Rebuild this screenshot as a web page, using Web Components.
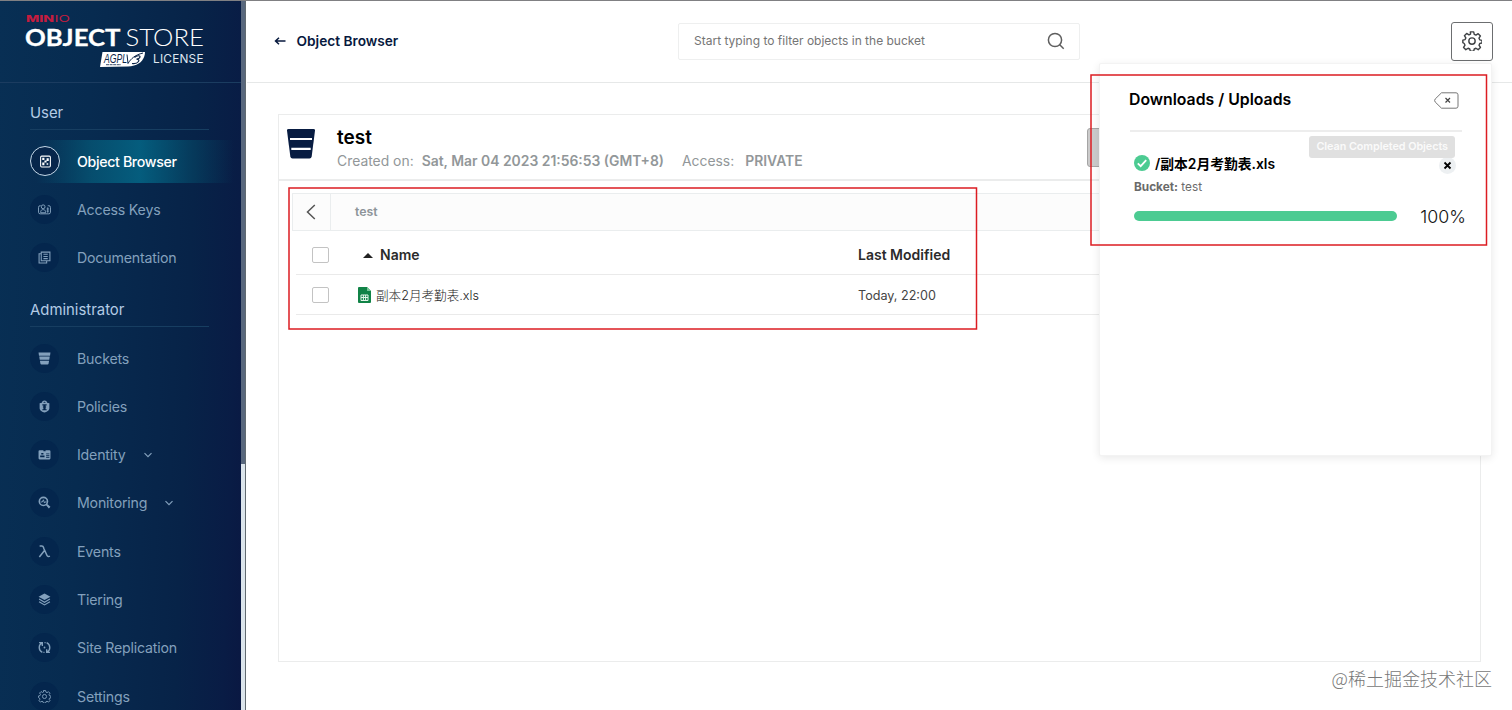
<!DOCTYPE html>
<html lang="en">
<head>
<meta charset="utf-8">
<title>MinIO Console</title>
<style>
  html, body { margin: 0; height: 100%; }
  body {
    overflow: hidden;
    background: #fff;
    font-family: Inter, "Noto Sans CJK SC", sans-serif;
    color: #000;
  }
</style>
</head>
<body>
<console-app></console-app>

<script>
const ICONS = {
  browser: '<rect x="3" y="2" width="18" height="20" rx="2" fill="none" stroke="currentColor" stroke-width="2"/><path d="M6 5h4v4H6zM14 6h4v5h-4zM10 10h4v4h-4zM6 14h4v5H6zM14 15h3v3h-3z"/>',
  keys: '<g fill="none" stroke="currentColor" stroke-width="1.8"><path d="M5 5H4a3 3 0 0 0-3 3v9a3 3 0 0 0 3 3h16a3 3 0 0 0 3-3V8a3 3 0 0 0-3-3h-2"/><circle cx="9.500" cy="7" r="3.500"/><path d="M5 18v-2c0-5 9-5 9 0v2zM18 8v10M16 11h4M16 15h4"/></g>',
  docs: '<g fill="none" stroke="currentColor" stroke-width="2"><path d="M6 2h16v16H6zM6 5H2v17h14v-4M10 6h8M10 10h8M10 14h8"/></g>',
  bucket: '<path d="M1 1h22l-.8 6H1.800zM2.300 8.500h19.400l-.9 6H3.200zM3.600 16h16.800l-.8 5q-.3 2-2 2H6.400q-1.700 0-2-2z"/>',
  policy: '<path fill-rule="evenodd" d="M12 1a5 5 0 0 1 5 4l4 1v9c0 4-5 7-9 8-4-1-9-4-9-8V6l4-1a5 5 0 0 1 5-4zm-2 4h4a2 2 0 0 0-4 0zm-2 3v2h2v2H9v2h1v3H8v2h8v-2h-2v-3h1v-2h-1v-2h2V8z"/>',
  identity: '<path fill-rule="evenodd" d="M3 4h7v2h4V4h7q2 0 2 2v13q0 2-2 2H3q-2 0-2-2V6q0-2 2-2zm3 5v3h4V9zm-2 5v3h8v-3zm11-4v1.500h6V10zm0 3.500V15h6v-1.500zm0 3.500v1.500h6V17z"/>',
  monitor: '<circle cx="10" cy="10" r="7.500" fill="none" stroke="currentColor" stroke-width="3"/><path d="M16 14l7 6-3 3-6-7z"/><path d="M5 11h3l2-4 2 6 1-2h3" fill="none" stroke="currentColor" stroke-width="1.800"/>',
  lambda: '<path d="M3 2h4c3 0 3 2 4 5l5 11c1 3 3 4 6 2.500M12 10L2.500 22" fill="none" stroke="currentColor" stroke-width="2.800"/>',
  tiers: '<path d="M12 1l11 6-11 6L1 7z"/><path d="M2 11l10 6 10-6M2 16l10 6 10-6" fill="none" stroke="currentColor" stroke-width="2.200"/>',
  sync: '<g fill="none" stroke="currentColor" stroke-width="2.500"><path d="M8 21C0 17 1 7 7 4M2 3h6v6M16 3c8 4 7 14 1 17M22 21h-6v-6M14 3h-2M12 21h-2"/></g><circle cx="12" cy="12" r="1.700"/>',
  gear: '<g fill="none" stroke="currentColor" stroke-width="1.700" stroke-linejoin="round"><path d="M10 1h4l.7 3 2 .9 2.700-1.700 2.700 2.700-1.700 2.700.9 2 2.700.700v3l-2.700.700-.9 2 1.700 2.700-2.700 2.700-2.700-1.700-2 .9-.7 2.600h-4l-.7-2.600-2-.9-2.700 1.700-2.700-2.700 1.700-2.700-.9-2L1 14v-3l2.700-.7.9-2-1.700-2.700 2.700-2.700 2.700 1.700 2-.9z"/><circle cx="12" cy="12" r="3.800"/></g>'
};

const CHEVRON = '<svg class="chev" viewBox="0 0 10 10"><path d="M1.500 3.200L5 6.700l3.500-3.500" fill="none" stroke="currentColor" stroke-width="1.200"/></svg>';

class BaseElement extends HTMLElement {
  constructor() {
    super();
    this.attachShadow({ mode: 'open' });
  }
  connectedCallback() {
    const template = document.createElement('template');
    template.innerHTML = this.render();
    this.shadowRoot.replaceChildren(template.content.cloneNode(true));
  }
}

class GlyphIcon extends BaseElement {
  render() {
    return `
      <style>
        :host { display: block; width: 13px; height: 13px; }
        svg { display: block; width: 100%; height: 100%; fill: currentColor; }
      </style>
      <svg viewBox="0 0 24 24">${ICONS[this.getAttribute('name')]}</svg>
    `;
  }
}
customElements.define('glyph-icon', GlyphIcon);

class ProductLogo extends BaseElement {
  render() {
    return `
      <style>
        :host { display: block; height: 82px; border-bottom: 1px solid #1b3c60; box-sizing: border-box; }
        svg { display: block; width: 241px; height: 81px; }
      </style>
      <svg viewBox="0 1 241 81">
        <g font-family="Inter, sans-serif">
          <text x="26" y="22.300" font-size="9.500" font-weight="800" fill="#c51c3f" textLength="28" lengthAdjust="spacingAndGlyphs">MIN</text>
          <text x="54.500" y="22.300" font-size="9.500" font-weight="400" fill="#c51c3f" textLength="15.500" lengthAdjust="spacingAndGlyphs">IO</text>
        </g>
        <g font-family="Lato, sans-serif" fill="#fff">
          <text x="25" y="46.300" font-size="23" font-weight="700" stroke="#fff" stroke-width=".3" textLength="95.500" lengthAdjust="spacingAndGlyphs">OBJECT</text>
          <text x="125.500" y="46.300" font-size="23" font-weight="300" textLength="78.500" lengthAdjust="spacingAndGlyphs">STORE</text>
        </g>
        <path d="M102.500 52H145c0 6-4 12-11 13.500-2 .7-4 1-6 1.100l-28 .400z" fill="#fff"/>
        <text x="104" y="62.500" font-family="Liberation Sans, sans-serif" font-size="12" font-style="italic" fill="#0a2347" textLength="23" lengthAdjust="spacingAndGlyphs">AGPL</text>
        <path d="M127 54.500l1 9c3-5 7-8.500 15-10.500" fill="none" stroke="#0a2347" stroke-width="1"/>
        <path d="M134.500 57.500c2-2 6-2.500 5.500-.5-.3 1.500-2 2-3.500 2.200 2 .1 3 .9 2 2.300-1.300 1.900-4 2.400-6.500 2" fill="none" stroke="#0a2347" stroke-width="1.200"/>
        <path d="M106 64.700h15" stroke="#0a2347" stroke-width=".8" stroke-dasharray="3 .6"/>
        <text x="153" y="63.300" font-family="Inter, sans-serif" font-size="11.800" fill="#dfe7f1" textLength="50.500">LICENSE</text>
      </svg>
    `;
  }
}
customElements.define('product-logo', ProductLogo);

class NavSection extends BaseElement {
  render() {
    return `
      <style>
        :host { display: block; }
        h2 {
          margin: 0 32px 7px 30px;
          height: 45px;
          line-height: 56px;
          font-size: 14.900px;
          font-weight: 400;
          color: #b3cbe5;
          border-bottom: 1px solid #173e61;
          box-sizing: border-box;
        }
      </style>
      <h2>${this.getAttribute('label')}</h2>
      <slot></slot>
    `;
  }
}
customElements.define('nav-section', NavSection);

class NavItem extends BaseElement {
  render() {
    return `
      <style>
        :host {
          display: flex;
          align-items: center;
          height: 48.300px;
          padding-left: 30px;
          color: #83a0bc;
          font-size: 14.200px;
          letter-spacing: -.2px;
        }
        .disc {
          display: flex;
          align-items: center;
          justify-content: center;
          width: 29px;
          height: 29px;
          margin-right: 18px;
          border-radius: 50%;
          box-sizing: border-box;
          background: #04264d;
        }
        .chev { width: 10px; height: 10px; margin-left: 17px; }
        :host([active]) {
          color: #fff;
          font-weight: 500;
          letter-spacing: -.350px;
          background: linear-gradient(90deg, transparent 15%, rgba(5, 96, 126, .65) 38%, rgba(4, 102, 134, .85) 58%, rgba(5, 80, 110, .5) 80%, transparent 97%) 0 3px / 100% 43px no-repeat;
        }
        :host([active]) .disc { border: 1px solid #c5d8e8; background: #07264b; width: 30px; height: 30px; margin-right: 17px; }
      </style>
      <span class="disc"><glyph-icon name="${this.getAttribute('icon')}"></glyph-icon></span>
      <span><slot></slot></span>
      ${this.hasAttribute('expandable') ? CHEVRON : ''}
    `;
  }
}
customElements.define('nav-item', NavItem);

class SideNav extends BaseElement {
  render() {
    return `
      <style>
        :host {
          display: flex;
          width: 247px;
          flex: none;
          overflow: hidden;
        }
        nav {
          width: 241px;
          background: linear-gradient(92deg, #082f54 0%, #072b50 35%, #072348 75%, #091c45 93%, #0a1842 100%);
        }
        nav-section:first-of-type { margin-top: 2px; }
        .track { width: 4px; background: #dbe4eb; border-right: 1px solid #616a70; }
        .thumb { height: 463px; background: #58677d; }
      </style>
      <nav>
        <product-logo></product-logo>
        <nav-section label="User">
          <nav-item icon="browser" active>Object Browser</nav-item>
          <nav-item icon="keys">Access Keys</nav-item>
          <nav-item icon="docs">Documentation</nav-item>
        </nav-section>
        <nav-section label="Administrator">
          <nav-item icon="bucket">Buckets</nav-item>
          <nav-item icon="policy">Policies</nav-item>
          <nav-item icon="identity" expandable>Identity</nav-item>
          <nav-item icon="monitor" expandable>Monitoring</nav-item>
          <nav-item icon="lambda">Events</nav-item>
          <nav-item icon="tiers">Tiering</nav-item>
          <nav-item icon="sync">Site Replication</nav-item>
          <nav-item icon="gear">Settings</nav-item>
        </nav-section>
      </nav>
      <div class="track"><div class="thumb"></div></div>
    `;
  }
}
customElements.define('side-nav', SideNav);

class SearchBox extends BaseElement {
  render() {
    return `
      <style>
        :host {
          display: flex;
          align-items: center;
          justify-content: space-between;
          width: 402px;
          height: 37px;
          padding: 0 14px 1px 15px;
          box-sizing: border-box;
          border: 1px solid #eeefef;
          border-radius: 2px;
          font-size: 12px;
          color: #757575;
        }
        span { padding-bottom: 2px; }
        svg { width: 18px; height: 18px; }
      </style>
      <span><slot></slot></span>
      <svg viewBox="0 0 18 18" fill="none" stroke="#5e5e5e" stroke-width="1.500"><circle cx="8" cy="8" r="6.600"/><path d="M12.500 12.500l4.200 4.200"/></svg>
    `;
  }
}
customElements.define('search-box', SearchBox);

class PageHeader extends BaseElement {
  render() {
    return `
      <style>
        :host {
          display: grid;
          grid-template-columns: 431px 402px 1fr;
          align-items: center;
          height: 82px;
          box-sizing: border-box;
          border-bottom: 1px solid #e6e8e8;
        }
        .back { display: flex; align-items: center; gap: 11px; padding: 0 0 2px 26.500px; font-size: 13.700px; font-weight: 600; color: #07193e; }
        .back svg { width: 12px; height: 10px; }
        button {
          justify-self: end;
          display: flex;
          align-items: center;
          justify-content: center;
          width: 42px;
          height: 39px;
          margin-right: 19px;
          padding: 0 1px 2px 0;
          border: 1px solid #6c6e70;
          border-radius: 3px;
          background: #fff;
          color: #3f4245;
        }
        glyph-icon { width: 20px; height: 20px; }
      </style>
      <div class="back">
        <svg viewBox="0 0 12 10" fill="none" stroke="currentColor" stroke-width="1.500"><path d="M11.500 5H1.500M5 1.700L1.500 5 5 8.300"/></svg>
        <span>Object Browser</span>
      </div>
      <search-box>Start typing to filter objects in the bucket</search-box>
      <button><glyph-icon name="gear"></glyph-icon></button>
    `;
  }
}
customElements.define('page-header', PageHeader);

class BucketHeader extends BaseElement {
  render() {
    return `
      <style>
        :host {
          display: flex;
          height: 66px;
          box-sizing: border-box;
          padding: 0 16px 0 8px;
          border-bottom: 2px solid #ebecec;
        }
        .logo { width: 28px; height: 30px; margin-top: 14px; }
        .info { margin-left: 22px; flex: 1; }
        h1 { margin: 10px 0 0; font-size: 19px; line-height: 25px; font-weight: 600; }
        p { display: flex; margin: 1px 0 0; font-size: 13.900px; line-height: 20px; color: #929799; }
        b { margin-left: 8px; font-weight: 600; }
        .access { margin-left: 18px; }
        .access + b { margin-left: 11px; }
        .tools { width: 375px; height: 37px; margin-top: 13px; border: 1px solid #a5a5a5; border-radius: 3px; background: #cbcbcb; }
      </style>
      <svg class="logo" viewBox="0 0 28 30"><path d="M1.500 0h25q1.700 0 1.500 1.700l-3.300 25.600Q24.400 29.500 22.500 29.500h-17q-1.900 0-2.200-2.200L0 1.700Q-.2 0 1.500 0z" fill="#081c42"/><path d="M3 10h22M4.300 19.800h19.400" stroke="#fff" stroke-width="2.200"/></svg>
      <div class="info">
        <h1>test</h1>
        <p><span>Created on:</span><b>Sat, Mar 04 2023 21:56:53 (GMT+8)</b><span class="access">Access:</span><b>PRIVATE</b></p>
      </div>
      <div class="tools"></div>
    `;
  }
}
customElements.define('bucket-header', BucketHeader);

class ObjectList extends BaseElement {
  render() {
    return `
      <style>
        :host { display: block; margin: 12px 14px 0 13px; }
        .crumbs {
          display: flex;
          align-items: center;
          height: 38px;
          box-sizing: border-box;
          border: 1px solid #eaedee;
          background: #fcfcfc;
          font-size: 12px;
          font-weight: 600;
          color: #8d9499;
        }
        .crumbs > :last-child { padding-bottom: 2px; font-size: 12.300px; }
        .up {
          display: flex;
          align-items: center;
          justify-content: center;
          width: 38px;
          height: 100%;
          margin-right: 24px;
          box-sizing: border-box;
          border-right: 1px solid #eaedee;
        }
        .up svg { width: 10px; height: 16px; margin-right: 1px; }
        .row {
          display: grid;
          grid-template-columns: 46px 500px 1fr;
          align-items: center;
          height: 40px;
          box-sizing: border-box;
          margin-left: 4px;
          padding-left: 16px;
          border-bottom: 1px solid #eaeaea;
          font-size: 12.600px;
          color: #444;
        }
        .row > :last-child { padding-top: 1px; }
        .head { height: 44px; font-size: 14px; font-weight: 600; color: #2b2b2b; padding-top: 4px; }
        .head > :last-child { padding-top: 0; }
        .box { width: 17px; height: 16px; box-sizing: border-box; border: 1px solid #c3c3c3; border-radius: 2px; background: #fff; }
        .name { display: flex; align-items: center; }
        .sort { width: 10px; height: 5px; margin: 2px 7px 0 5px; }
        .sheet { width: 13px; height: 16px; margin-right: 5px; }
        .cjk { font-weight: 300; color: #222; }
      </style>
      <div class="crumbs">
        <span class="up"><svg viewBox="0 0 10 16" fill="none" stroke="#555" stroke-width="1.500"><path d="M8.800 1L1.500 8l7.300 7"/></svg></span>
        <span>test</span>
      </div>
      <div class="row head">
        <span class="box"></span>
        <span class="name"><svg class="sort" viewBox="0 0 10 5"><path d="M0 5l5-5 5 5z" fill="#222"/></svg>Name</span>
        <span>Last Modified</span>
      </div>
      <div class="row">
        <span class="box"></span>
        <span class="name">
          <svg class="sheet" viewBox="0 0 13 16"><path d="M1 0h8l4 4v11q0 1-1 1H1q-1 0-1-1V1q0-1 1-1z" fill="#118347"/><path d="M9 0l4 4H9z" fill="#75c596"/><path d="M3 8h7v5.500H3zM3 10.500h7M5.400 8v5.500M7.600 8v5.500" fill="none" stroke="#e5f5eb" stroke-width="1"/></svg>
          <span class="cjk">副本2月考勤表.xls</span>
        </span>
        <span>Today, 22:00</span>
      </div>
    `;
  }
}
customElements.define('object-list', ObjectList);

class TransferItem extends BaseElement {
  render() {
    return `
      <style>
        :host { display: block; padding: 20px 25px 0 4px; }
        .title { display: flex; align-items: center; height: 22px; font-size: 13.800px; font-weight: 600; }
        .ok { width: 16px; height: 16px; margin-right: 5px; }
        .close { width: 17px; height: 17px; margin: 5px 10px 0 auto; }
        .bucket { margin-top: 5px; font-size: 11.800px; line-height: 17px; color: #6a6a6a; }
        .progress { display: flex; align-items: center; justify-content: space-between; height: 28px; margin-top: 6px; }
        .bar { width: 263px; height: 10px; border-radius: 5px; background: #4ccb92; }
        .value { font-size: 17.800px; font-weight: 300; color: #111; }
      </style>
      <div class="title">
        <svg class="ok" viewBox="0 0 16 16"><circle cx="8" cy="8" r="8" fill="#4ccb92"/><path d="M3.800 8.300l2.900 2.900 5.500-6" fill="none" stroke="#fff" stroke-width="1.800"/></svg>
        <span>/副本2月考勤表.xls</span>
        <svg class="close" viewBox="0 0 17 17"><circle cx="8.500" cy="8.500" r="8.500" fill="#edf0f2"/><path d="M5.500 5.500l6 6M11.500 5.500l-6 6" stroke="#000" stroke-width="1.800"/></svg>
      </div>
      <div class="bucket"><b>Bucket:</b> test</div>
      <div class="progress"><div class="bar"></div><span class="value">100%</span></div>
    `;
  }
}
customElements.define('transfer-item', TransferItem);

class TransfersPanel extends BaseElement {
  render() {
    return `
      <style>
        :host {
          display: block;
          width: 393px;
          height: 393px;
          box-sizing: border-box;
          padding-left: 30px;
          background: #fff;
          border: 1px solid #f3f3f3;
          border-radius: 2px;
          box-shadow: 0 2px 9px rgba(0, 0, 0, .09);
        }
        header {
          position: relative;
          display: flex;
          align-items: center;
          justify-content: space-between;
          width: 332px;
          height: 68px;
          box-sizing: border-box;
          padding: 4px 3px 0 0;
          border-bottom: 2px solid #ededed;
        }
        h2 { margin: 0 0 0 -1px; font-size: 15.800px; font-weight: 600; }
        header svg { width: 25px; height: 17px; margin-top: 2px; }
        .tip {
          position: absolute;
          right: 7px;
          top: 72px;
          padding: 0 7px;
          border-radius: 3px;
          background: #e0e0e0;
          color: #fafafa;
          font-size: 10.800px;
          line-height: 22px;
          font-weight: 600;
          letter-spacing: -.050px;
          white-space: nowrap;
        }
      </style>
      <header>
        <h2>Downloads / Uploads</h2>
        <svg viewBox="0 0 25 17" fill="none" stroke="#777" stroke-width="1"><path d="M7.500.8H22q2 0 2 2v11.400q0 2-2 2H7.500L1.200 10q-1.200-1.500 0-3z"/><path d="M11.500 6l4.500 4.500M16 6l-4.500 4.500" stroke="#444" stroke-width="1.200"/></svg>
        <span class="tip">Clean Completed Objects</span>
      </header>
      <transfer-item></transfer-item>
    `;
  }
}
customElements.define('transfers-panel', TransfersPanel);

class MarkFrame extends BaseElement {
  render() {
    return `
      <style>
        :host { display: block; }
        svg { display: block; width: 100%; height: 100%; overflow: visible; }
      </style>
      <svg><rect width="100%" height="100%" fill="none" stroke="#dc1c22" stroke-width="1.500"/></svg>
    `;
  }
}
customElements.define('mark-frame', MarkFrame);

class ConsoleApp extends BaseElement {
  render() {
    return `
      <style>
        :host {
          display: flex;
          position: relative;
          height: 100vh;
          box-sizing: border-box;
          border-top: 1px solid #808083;
          overflow: hidden;
        }
        main { flex: 1; min-width: 0; }
        .card {
          height: 548px;
          box-sizing: border-box;
          margin: 31px 31px 0;
          border: 1px solid #ebecec;
        }
        /* layers above the page */
        transfers-panel { position: absolute; left: 1099px; top: 62px; }
        mark-frame { position: absolute; }
        .files { left: 289px; top: 187px; width: 687.500px; height: 141px; }
        .uploads { left: 1091px; top: 74px; width: 395.500px; height: 170px; }
        .credit {
          position: absolute;
          right: 20px;
          bottom: 18px;
          font: 300 18px/28px "Noto Sans CJK SC", sans-serif;
          color: #777;
          white-space: nowrap;
        }
      </style>
      <side-nav></side-nav>
      <main>
        <page-header></page-header>
        <div class="card">
          <bucket-header></bucket-header>
          <object-list></object-list>
        </div>
      </main>
      <transfers-panel></transfers-panel>
      <mark-frame class="files"></mark-frame>
      <mark-frame class="uploads"></mark-frame>
      <div class="credit">@稀土掘金技术社区</div>
    `;
  }
}
customElements.define('console-app', ConsoleApp);
</script>
</body>
</html>
